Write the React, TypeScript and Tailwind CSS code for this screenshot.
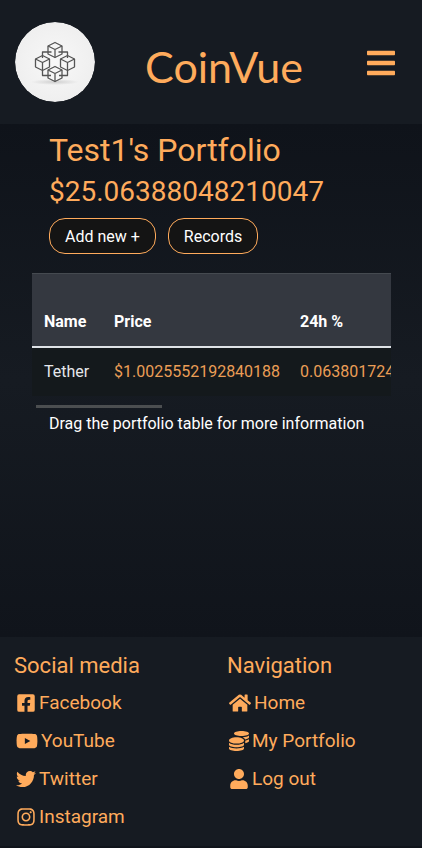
import type { ReactNode } from "react";
import {
  FaBars,
  FaCoins,
  FaFacebookSquare,
  FaHome,
  FaInstagram,
  FaTwitter,
  FaUser,
  FaYoutube,
} from "react-icons/fa";

function Cube({ x, y }: { x: number; y: number }) {
  return (
    <g transform={`translate(${x} ${y})`} fill="#f5f5f5">
      <path d="M0-7.500 7-4V4L0 7.500-7 4V-4Z" />
      <path d="M-7-4 0-.5 7-4M0-.5V7.500" fill="none" />
    </g>
  );
}

function Logo() {
  return (
    <svg viewBox="0 0 80 80" className="size-20 shrink-0 rounded-full" role="img" aria-label="CoinVue logo">
      <defs>
        <radialGradient id="logoShade">
          <stop offset="0" stopColor="#aaa" stopOpacity="0.5" />
          <stop offset="1" stopColor="#aaa" stopOpacity="0" />
        </radialGradient>
        <radialGradient id="logoDisc">
          <stop offset="0" stopColor="#f8f8f8" />
          <stop offset="1" stopColor="#efefef" />
        </radialGradient>
      </defs>
      <circle cx="40" cy="40" r="40" fill="url(#logoDisc)" />
      <ellipse cx="40" cy="60" rx="24" ry="3" fill="url(#logoShade)" />
      <g stroke="#555" strokeWidth="1.3" strokeLinejoin="round" fill="none">
        <Cube x={40} y={28} />
        <Cube x={27.5} y={41} />
        <Cube x={52.5} y={41} />
        <Cube x={40} y={52} />
        <path d="M36.500 30H27.500V36M43.500 30H52.500V36M27.500 49V53.500H36M52.500 49V53.500H44" />
      </g>
    </svg>
  );
}

function FooterLink({ icon, children }: { icon: ReactNode; children: ReactNode }) {
  return (
    <li>
      <a href="#" className="flex items-center gap-[3px] text-[19px] leading-[30px]">
        {icon}
        <span>{children}</span>
      </a>
    </li>
  );
}

const button =
  "h-9 rounded-2xl border border-[#ffab5c] bg-[#141414] px-[15px] pt-0.5 text-base text-white";

export default function App() {
  return (
    <div className="flex min-h-screen flex-col bg-[#161b22] font-['Roboto',sans-serif] text-[#ffab5c]">
      <header className="flex h-31 items-center justify-between pr-[25px] pl-[15px]">
        <Logo />
        <h1 className="pt-2 pr-3 font-['Lato',sans-serif] text-[43px] leading-none">CoinVue</h1>
        <button type="button" aria-label="Open menu" className="pt-0.5">
          <FaBars className="size-8" />
        </button>
      </header>

      <main className="flex-1 bg-linear-to-b from-[#0f131a] via-[#161b22] to-[#10141b] px-8 pb-10">
        <section className="px-[17px]">
          <h2 className="pt-1 text-[32px] leading-11">Test1's Portfolio</h2>
          <p className="text-[28px] leading-10">$25.06388048210047</p>
          <div className="flex gap-3 pt-1.5">
            <button type="button" className={button}>Add new +</button>
            <button type="button" className={button}>Records</button>
          </div>
        </section>

        <div className="mt-[19px] -mr-px overflow-x-auto [scrollbar-width:none]">
          <table className="w-[1000px] table-fixed text-left text-base">
            <thead className="border-t border-b-2 border-t-[#454a50] border-b-[#dee2e6] bg-[#343840] text-white">
              <tr className="h-[73px]">
                <th className="w-[70px] px-3 pb-3 align-bottom">Name</th>
                <th className="w-[186px] px-3 pb-3 align-bottom">Price</th>
                <th className="w-[200px] px-3 pb-3 align-bottom">24h %</th>
                <th className="px-3 pb-3 align-bottom">Amount</th>
              </tr>
            </thead>
            <tbody className="bg-[#14191c]">
              <tr className="h-[49px]">
                <td className="px-3 text-gray-200">Tether</td>
                <td className="px-3 text-[#eb9e56]">$1.0025552192840188</td>
                <td className="px-3 text-[#eb9e56]">0.06380172444</td>
                <td className="px-3 text-[#eb9e56]">25</td>
              </tr>
            </tbody>
          </table>
        </div>
        <div className="mt-[9px] ml-1 h-[3px] w-[126px] bg-[#4b4e50]" />
        <p className="pt-1 pl-[17px] text-base text-white">Drag the portfolio table for more information</p>
      </main>

      <footer className="grid h-[211px] grid-cols-2 border-b-2 border-[#10141b] px-3.5 pt-[13px]">
        <section>
          <h3 className="text-[22px] leading-8">Social media</h3>
          <ul className="flex flex-col gap-2 pt-1.5 pl-0.5">
            <FooterLink icon={<FaFacebookSquare className="size-5" />}>Facebook</FooterLink>
            <FooterLink icon={<FaYoutube className="size-[22px]" />}>YouTube</FooterLink>
            <FooterLink icon={<FaTwitter className="size-5" />}>Twitter</FooterLink>
            <FooterLink icon={<FaInstagram className="size-5" />}>Instagram</FooterLink>
          </ul>
        </section>
        <nav aria-label="Footer" className="pl-4">
          <h3 className="text-[22px] leading-8">Navigation</h3>
          <ul className="flex flex-col gap-2 pt-1.5 pl-0.5">
            <FooterLink icon={<FaHome className="size-[22px]" />}>Home</FooterLink>
            <FooterLink icon={<FaCoins className="size-5" />}>My Portfolio</FooterLink>
            <FooterLink icon={<FaUser className="size-5" />}>Log out</FooterLink>
          </ul>
        </nav>
      </footer>
    </div>
  );
}
